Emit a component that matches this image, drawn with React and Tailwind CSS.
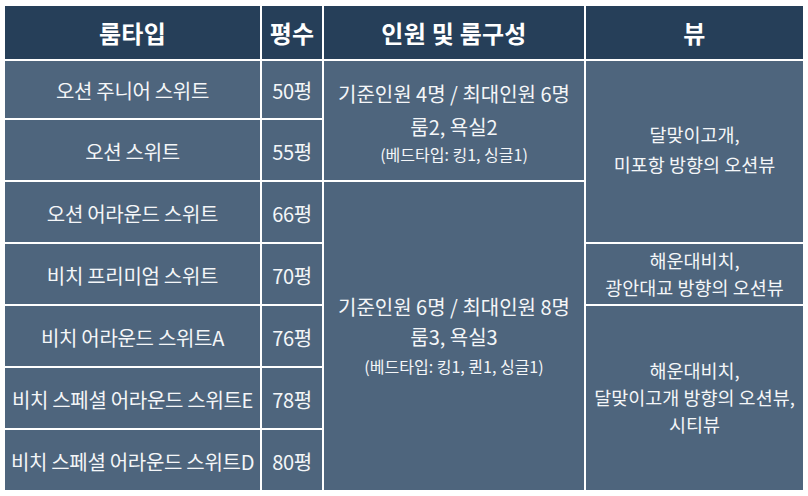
import React from "react";

const ROOMS = [
  { name: "오션 주니어 스위트", size: "50평" },
  { name: "오션 스위트", size: "55평" },
  { name: "오션 어라운드 스위트", size: "66평" },
  { name: "비치 프리미엄 스위트", size: "70평" },
  { name: "비치 어라운드 스위트A", size: "76평" },
  { name: "비치 스페셜 어라운드 스위트E", size: "78평" },
  { name: "비치 스페셜 어라운드 스위트D", size: "80평" },
];

const HEADERS = ["룸타입", "평수", "인원 및 룸구성", "뷰"];

// explicit row starts so the spanning cells line up (class names written out in full)
const ROW_START = ["row-start-2", "row-start-3", "row-start-4", "row-start-5", "row-start-6", "row-start-7", "row-start-8"];

function Cell({ className = "", children }) {
  return (
    <div className={`flex flex-col items-center justify-center text-center bg-[#4e657d] text-[#f4f6f8] ${className}`}>
      {children}
    </div>
  );
}

export default function App() {
  return (
    <div className="w-[808px] h-[496px] bg-white pt-[6px] pl-[5px]" style={{ fontFamily: "'Noto Sans CJK KR', 'Noto Sans', sans-serif" }}>
      <div className="grid grid-cols-[255px_60px_260px_217px] grid-rows-[53px_57px_60px_60px_60px_60px_60px_60px] gap-[2px]">
        {HEADERS.map((h, i) => (
          <div key={h} className={`row-start-1 flex items-center justify-center bg-[#263f59] text-white text-[24px] font-bold tracking-[0.01em] ${["col-start-1", "col-start-2", "col-start-3", "col-start-4"][i]}`}>
            {h}
          </div>
        ))}

        {ROOMS.map((r, i) => (
          <React.Fragment key={r.name}>
            <Cell className={`col-start-1 text-[20px] tracking-[-0.015em] pt-[3px] ${ROW_START[i]}`}>{r.name}</Cell>
            <Cell className={`col-start-2 text-[20px] tracking-[-0.02em] pt-[3px] ${ROW_START[i]}`}>{r.size}</Cell>
          </React.Fragment>
        ))}

        <Cell className="col-start-3 row-start-2 row-span-2 pt-[2px]">
          <div className="text-[20px] leading-[33px]">기준인원 4명 / 최대인원 6명</div>
          <div className="text-[20px] leading-[33px]">룸2, 욕실2</div>
          <div className="text-[16px] leading-[23px]">(베드타입: 킹1, 싱글1)</div>
        </Cell>
        <Cell className="col-start-3 row-start-4 row-span-5 pb-[2px]">
          <div className="text-[20px] leading-[31px]">기준인원 6명 / 최대인원 8명</div>
          <div className="text-[20px] leading-[30px]">룸3, 욕실3</div>
          <div className="text-[16px] leading-[28px]">(베드타입: 킹1, 퀸1, 싱글1)</div>
        </Cell>

        <Cell className="col-start-4 row-start-2 row-span-3 text-[18.5px] leading-[30px] pb-[6px]">
          <div>달맞이고개,</div>
          <div>미포항 방향의 오션뷰</div>
        </Cell>
        <Cell className="col-start-4 row-start-5 text-[18.5px] leading-[27px]">
          <div>해운대비치,</div>
          <div>광안대교 방향의 오션뷰</div>
        </Cell>
        <Cell className="col-start-4 row-start-6 row-span-3 text-[18.5px] leading-[27px] pb-[2px]">
          <div>해운대비치,</div>
          <div>달맞이고개 방향의 오션뷰,</div>
          <div>시티뷰</div>
        </Cell>
      </div>
    </div>
  );
}
